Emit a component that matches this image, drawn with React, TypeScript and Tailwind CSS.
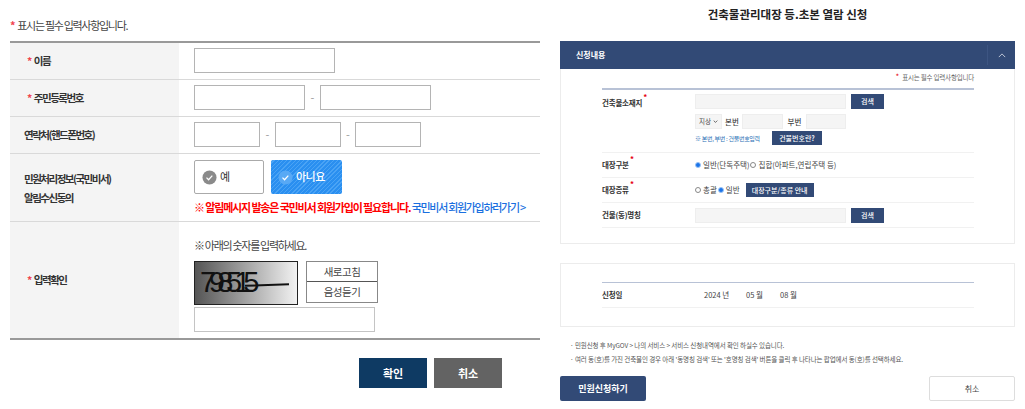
import React from 'react';

const Star = () => <span className="text-[#f0444f] font-bold mr-[3px]">*</span>;
const Req = () => <span className="absolute -top-[4px] -right-[5px] text-[8px] leading-none text-[#e60012] font-bold">*</span>;

const Input: React.FC<{ className: string }> = ({ className }) => (
  <div className={`h-[25px] bg-white border border-[#b4b4b4] ${className}`} />
);

const Dash = () => <span className="w-[15px] text-center text-[11px] text-[#999]">-</span>;

const Row: React.FC<{ label: React.ReactNode; className: string; children: React.ReactNode; last?: boolean }> = ({ label, className, children, last }) => (
  <div className={`flex ${last ? '' : 'border-b border-[#d9d9d9]'} ${className}`}>
    <div className="w-[169px] shrink-0 bg-[#f4f4f4] flex items-center text-[10.5px] font-semibold text-[#333] tracking-[-1.5px]">{label}</div>
    <div className="flex-1 pl-[15px]">{children}</div>
  </div>
);

const CheckCircle: React.FC<{ className: string }> = ({ className }) => (
  <svg viewBox="0 0 16 16" className={`w-[15px] h-[15px] ${className}`}>
    <circle cx="8" cy="8" r="7.5" fill="currentColor" />
    <path d="M4.8 8.2l2.2 2.2 4-4.4" fill="none" stroke="#fff" strokeWidth="1.3" />
  </svg>
);

const NavyBtn: React.FC<{ className: string; children: React.ReactNode }> = ({ className, children }) => (
  <div className={`bg-[#324a76] text-white text-[7px] font-medium flex items-center justify-center ${className}`}>{children}</div>
);

const Radio: React.FC<{ on?: boolean }> = ({ on }) => (
  <span className={`inline-block w-[6px] h-[6px] rounded-full border ${on ? 'bg-[#1a73e8] border-[#9cc4f5]' : 'bg-white border-[#888]'}`} />
);

const RightRow: React.FC<{ label: string; req?: boolean; className: string; children?: React.ReactNode }> = ({ label, req, className, children }) => (
  <div className={`flex items-center border-b border-[#f1f1f1] ${className}`}>
    <div className="w-[93px] shrink-0 text-[7.5px] font-semibold text-[#333] tracking-[-0.2px]">
      <span className="relative">{label}{req && <Req />}</span>
    </div>
    <div className="flex-1 flex items-center text-[7.5px] text-[#444]">{children}</div>
  </div>
);

export default function App() {
  return (
    <div className="w-[1025px] h-[409px] overflow-hidden bg-white flex font-['Noto_Sans_CJK_KR','Noto_Sans',sans-serif]">
      {/* left form */}
      <div className="w-[540px] shrink-0 pl-[10px] pt-[17px]">
        <div className="h-[24px] text-[11px] text-[#444] tracking-[-1.3px] leading-[16px] whitespace-nowrap"><Star />표시는 필수 입력사항입니다.</div>
        <div className="border-t-2 border-[#999] border-b-2 w-[530px]">
          <Row className="h-[37px]" label={<span className="pl-[17px]"><Star />이름</span>}>
            <Input className="w-[141px] mt-[5px]" />
          </Row>
          <Row className="h-[37px]" label={<span className="pl-[17px]"><Star />주민등록번호</span>}>
            <div className="flex items-center pt-[5px]">
              <Input className="w-[111px]" />
              <Dash />
              <Input className="w-[111px]" />
            </div>
          </Row>
          <Row className="h-[37px]" label={<span className="pl-[14px]">연락처(핸드폰번호)</span>}>
            <div className="flex items-center pt-[5px]">
              <Input className="w-[66px]" />
              <span className="w-[15px] text-center text-[11px] text-[#999]">-</span>
              <Input className="w-[66px]" />
              <span className="w-[14px] text-center text-[11px] text-[#999]">-</span>
              <Input className="w-[66px]" />
            </div>
          </Row>
          <Row className="h-[68px]" label={<div className="pl-[14px] leading-[19px]">민원처리정보(국민비서)<br />알림수신동의</div>}>
            <div className="pt-[6px]">
              <div className="flex gap-[7px]">
                <div className="w-[70px] h-[34px] border border-[#aaa] rounded-[2px] flex items-center pl-[7px] gap-[3px] text-[11px] text-[#333]">
                  <CheckCircle className="text-[#8a8a8a]" />
                  <span className="-mt-[2px]">예</span>
                </div>
                <div className="w-[71px] h-[34px] rounded-[2px] flex items-center pl-[7px] gap-[3px] text-[11px] font-medium text-white bg-[repeating-linear-gradient(135deg,#2a8ff0_0,#2a8ff0_2px,#4aa3f5_2px,#4aa3f5_3px)]">
                  <CheckCircle className="text-[#58a9f5]" />
                  <span className="-mt-[2px] tracking-[-0.5px]">아니요</span>
                </div>
              </div>
              <div className="mt-[5px] text-[11px] font-bold text-[#f00] tracking-[-1.15px] leading-[16px] whitespace-nowrap">
                ※ 알림메시지 발송은 국민비서 회원가입이 필요합니다. <span className="text-[#1a6fe0] font-medium tracking-[-1.3px]">국민비서 회원가입하러가기 &gt;</span>
              </div>
            </div>
          </Row>
          <Row last className="h-[116px]" label={<span className="pl-[17px]"><Star />입력확인</span>}>
            <div className="pt-[15px]">
              <div className="text-[11px] text-[#444] tracking-[-1.3px] leading-[16px]">※ 아래의 숫자를 입력하세요.</div>
              <div className="flex mt-[8px] gap-[8px]">
                <div className="relative w-[104px] h-[44px] border border-[#222] bg-[linear-gradient(90deg,#555,#f2f2f2)] overflow-hidden flex items-center pl-[5px] text-[29px] text-[#111] tracking-[-7.5px] font-['Liberation_Sans',sans-serif]">
                  798515
                  <div className="absolute left-[50px] top-[22px] w-[44px] h-[2px] bg-[#111] -rotate-2" />
                </div>
                <div className="w-[72px] h-[42px] border border-[#888] flex flex-col text-[10.5px] text-[#444] tracking-[-0.5px]">
                  <div className="h-[20px] border-b border-[#555] flex items-center justify-center">새로고침</div>
                  <div className="flex-1 flex items-center justify-center">음성듣기</div>
                </div>
              </div>
              <Input className="w-[181px] mt-[2px] !border-[#c4c4c4]" />
            </div>
          </Row>
        </div>
        <div className="flex justify-end gap-[7px] mt-[18px] w-[492px]">
          <div className="w-[68px] h-[30px] bg-[#0e3a63] text-white text-[11px] font-bold flex items-center justify-center">확인</div>
          <div className="w-[68px] h-[30px] bg-[#636363] text-white text-[11px] font-bold flex items-center justify-center">취소</div>
        </div>
      </div>

      {/* right form */}
      <div className="flex-1 pl-[20px] pr-[10px]">
        <div className="h-[41px] pt-[5px] text-center text-[11.5px] leading-[18px] font-bold text-[#222]">건축물관리대장 등.초본 열람 신청</div>
        <div className="h-[28px] bg-[#324a76] flex items-center text-white">
          <span className="flex-1 pl-[16px] text-[8px] font-bold">신청내용</span>
          <div className="w-[28px] h-[20px] border-l border-[#3d5582] flex items-center justify-center">
            <svg viewBox="0 0 10 6" className="w-[8px] h-[5px]"><path d="M1 5l4-4 4 4" fill="none" stroke="#dfe4ee" strokeWidth="1" /></svg>
          </div>
        </div>
        <div className="h-[175px] border border-t-0 border-[#ececec] pl-[41px] pr-[40px]">
          <div className="h-[19px] pt-[3px] text-right text-[6.5px] leading-[10px] text-[#666] tracking-[-0.2px]"><span className="text-[#e60012] text-[8px] mr-[3px]">*</span>표시는 필수 입력사항입니다</div>
          <div className="border-t-2 border-[#b8c2d6]">
            <div className="h-[63px] pt-[4px] border-b border-[#f1f1f1] flex text-[7.5px]">
              <div className="w-[93px] shrink-0 font-semibold text-[#333] pt-[3px] tracking-[-0.2px]"><span className="relative">건축물소재지<Req /></span></div>
              <div className="flex-1">
                <div className="flex gap-[5px]">
                  <div className="w-[151px] h-[15px] bg-[#f5f5f5] border border-[#eee]" />
                  <NavyBtn className="w-[33px] h-[15px]">검색</NavyBtn>
                </div>
                <div className="flex items-center mt-[5px] text-[#444]">
                  <div className="w-[27px] h-[15px] bg-[#f5f5f5] border border-[#eee] flex items-center justify-center gap-[2px] text-[6.5px]">지상
                    <svg viewBox="0 0 8 5" className="w-[5px] h-[3px]"><path d="M1 1l3 3 3-3" fill="none" stroke="#333" strokeWidth="1.2" /></svg>
                  </div>
                  <span className="w-[20px] text-center font-medium">본번</span>
                  <div className="w-[41px] h-[15px] bg-[#f5f5f5] border border-[#eee]" />
                  <span className="w-[23px] text-center font-medium">부번</span>
                  <div className="w-[40px] h-[15px] bg-[#f5f5f5] border border-[#eee]" />
                </div>
                <div className="flex items-center mt-[2px]">
                  <span className="w-[74px] mr-[3px] text-[6px] text-[#2a6fb5] tracking-[-0.3px] whitespace-nowrap">※ 본번, 부번 : 건물번호입력</span>
                  <NavyBtn className="w-[50px] h-[14px]">건물번호란?</NavyBtn>
                </div>
              </div>
            </div>
            <RightRow label="대장구분" req className="h-[25px]">
              <Radio on /><span className="ml-[2px]">일반(단독주택)</span>
              <span className="w-[1px]" /><Radio /><span className="ml-[2px]">집합(아파트,연립주택 등)</span>
            </RightRow>
            <RightRow label="대장종류" req className="h-[25px]">
              <Radio /><span className="ml-[2px]">총괄</span>
              <span className="w-[1px]" /><Radio on /><span className="ml-[2px]">일반</span>
              <NavyBtn className="w-[68px] h-[14px] ml-[6px]">대장구분/종류 안내</NavyBtn>
            </RightRow>
            <RightRow label="건물(동)명칭" className="h-[25px]">
              <div className="w-[151px] h-[15px] bg-[#f5f5f5] border border-[#eee]" />
              <NavyBtn className="w-[33px] h-[15px] ml-[5px]">검색</NavyBtn>
            </RightRow>
          </div>
        </div>
        <div className="h-[64px] mt-[19px] border border-[#ececec] pl-[41px] pr-[40px] pt-[18px]">
          <div className="border-t border-[#b8c2d6]">
            <RightRow label="신청일" className="h-[25px]">
              <span className="ml-[9px] w-[42px]">2024 년</span>
              <span className="w-[34px]">05 월</span>
              <span>08 월</span>
            </RightRow>
          </div>
        </div>
        <div className="mt-[11px] pl-[10px] text-[6.5px] leading-[14px] text-[#555] tracking-[-0.1px] whitespace-nowrap">
          <div>· 민원신청 후 MyGOV &gt; 나의 서비스 &gt; 서비스 신청내역에서 확인 하실수 있습니다.</div>
          <div>· 여러 동(호)를 가진 건축물인 경우 아래 '동명칭 검색' 또는 '호명칭 검색' 버튼을 클릭 후 나타나는 팝업에서 동(호)를 선택하세요.</div>
        </div>
        <div className="flex justify-between mt-[10px]">
          <div className="w-[86px] h-[25px] bg-[#324a76] rounded-[2px] text-white text-[9px] font-semibold flex items-center justify-center">민원신청하기</div>
          <div className="w-[86px] h-[25px] border border-[#ddd] rounded-[2px] text-[#444] text-[8px] flex items-center justify-center">취소</div>
        </div>
      </div>
    </div>
  );
}
